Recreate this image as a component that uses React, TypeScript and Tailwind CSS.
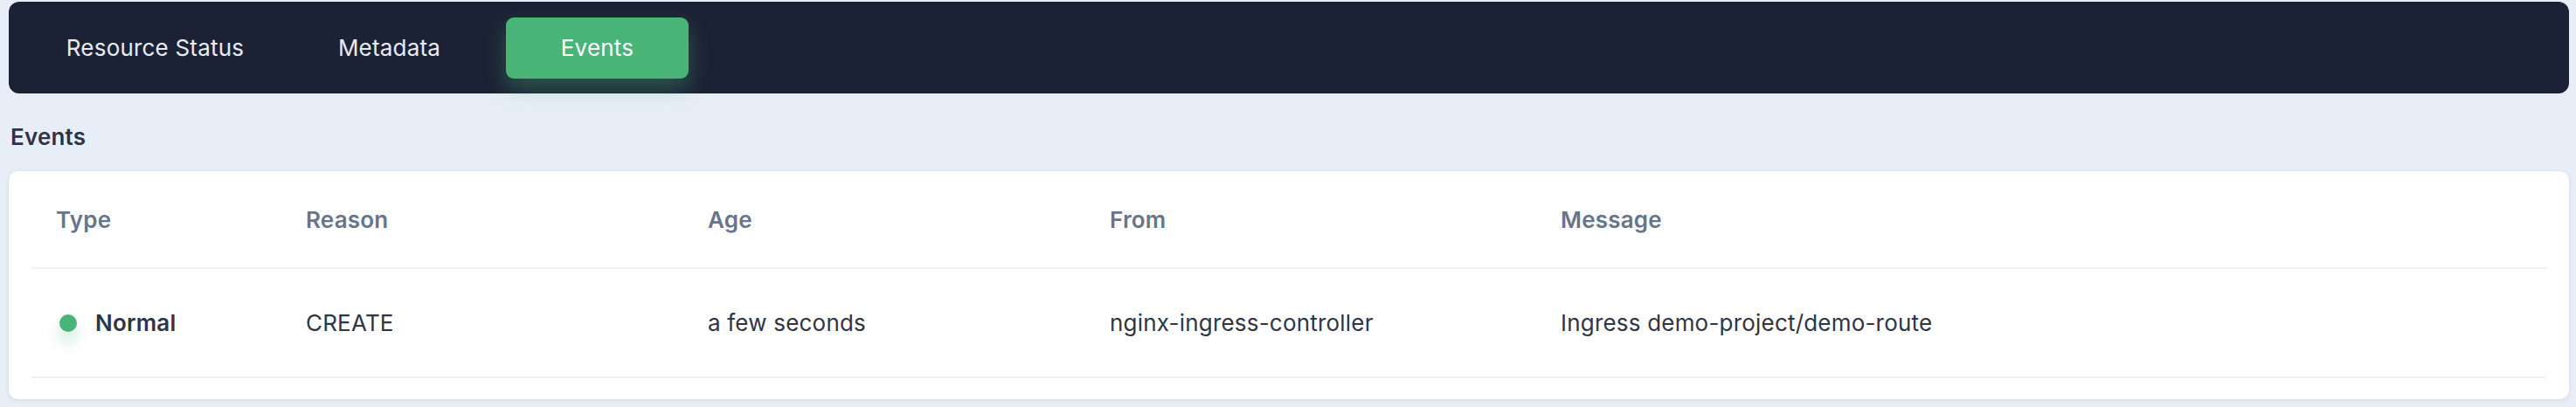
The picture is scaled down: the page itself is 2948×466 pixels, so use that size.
import { useState } from 'react';

type EventRow = {
  type: string;
  reason: string;
  age: string;
  from: string;
  message: string;
};

const tabs = [
  { key: 'status', label: 'Resource Status', width: 'w-[315px]' },
  { key: 'metadata', label: 'Metadata', width: 'w-[221px]' },
  { key: 'events', label: 'Events', width: 'w-[209px] ml-[23px]' },
];

const events: EventRow[] = [
  {
    type: 'Normal',
    reason: 'CREATE',
    age: 'a few seconds',
    from: 'nginx-ingress-controller',
    message: 'Ingress demo-project/demo-route',
  },
];

const columns = ['Type', 'Reason', 'Age', 'From', 'Message'];

// column grid shared by header + rows
const grid = 'grid grid-cols-[286px_460px_460px_516px_1fr]';

export default function App() {
  const [active, setActive] = useState('events');

  return (
    <div className="min-h-screen w-full bg-[#e8eef7] pl-[10px] pr-[8px] pt-[2px] font-['Inter',_'Liberation_Sans',_sans-serif] text-[26px] tracking-[0.2px]">
      {/* Tabs */}
      <div className="flex h-[105px] items-center rounded-[12px] bg-[#1c2235] pl-[10px]">
        {tabs.map((tab) => {
          const isActive = tab.key === active;
          return (
            <button
              key={tab.key}
              onClick={() => setActive(tab.key)}
              className={`${tab.width} h-[70px] rounded-[9px] text-center ${
                isActive
                  ? 'bg-[#48b478] text-white shadow-[0_12px_24px_rgba(72,180,120,0.35)]'
                  : 'text-[#e8ebf1]'
              }`}
            >
              {tab.label}
            </button>
          );
        })}
      </div>

      {/* Section title */}
      <div className="pb-[21px] pl-[2px] pt-[32px] font-semibold leading-[36px] text-[#2d3446]">
        Events
      </div>

      {/* Events table */}
      <div className="rounded-[10px] bg-white px-[26px] pb-[24px] shadow-[0_1px_4px_rgba(100,116,139,0.18)]">
        <div className={`${grid} h-[112px] items-center border-b-2 border-[#eef1f8]`}>
          {columns.map((col) => (
            <div key={col} className="pl-[28px] font-semibold text-[#66748c]">
              {col}
            </div>
          ))}
        </div>

        {events.map((ev, i) => (
          <div key={i} className={`${grid} h-[125px] items-center border-b-2 border-[#eef1f8] text-[#2f3545]`}>
            <div className="flex items-center pl-[32px]">
              <span className="h-[20px] w-[20px] rounded-full bg-[#48b478] shadow-[0_12px_18px_rgba(72,180,120,0.3)]" />
              <span className="ml-[21px] font-semibold text-[#2d3446]">{ev.type}</span>
            </div>
            <div className="pl-[28px]">{ev.reason}</div>
            <div className="pl-[28px]">{ev.age}</div>
            <div className="pl-[28px]">{ev.from}</div>
            <div className="pl-[28px]">{ev.message}</div>
          </div>
        ))}
      </div>
    </div>
  );
}
